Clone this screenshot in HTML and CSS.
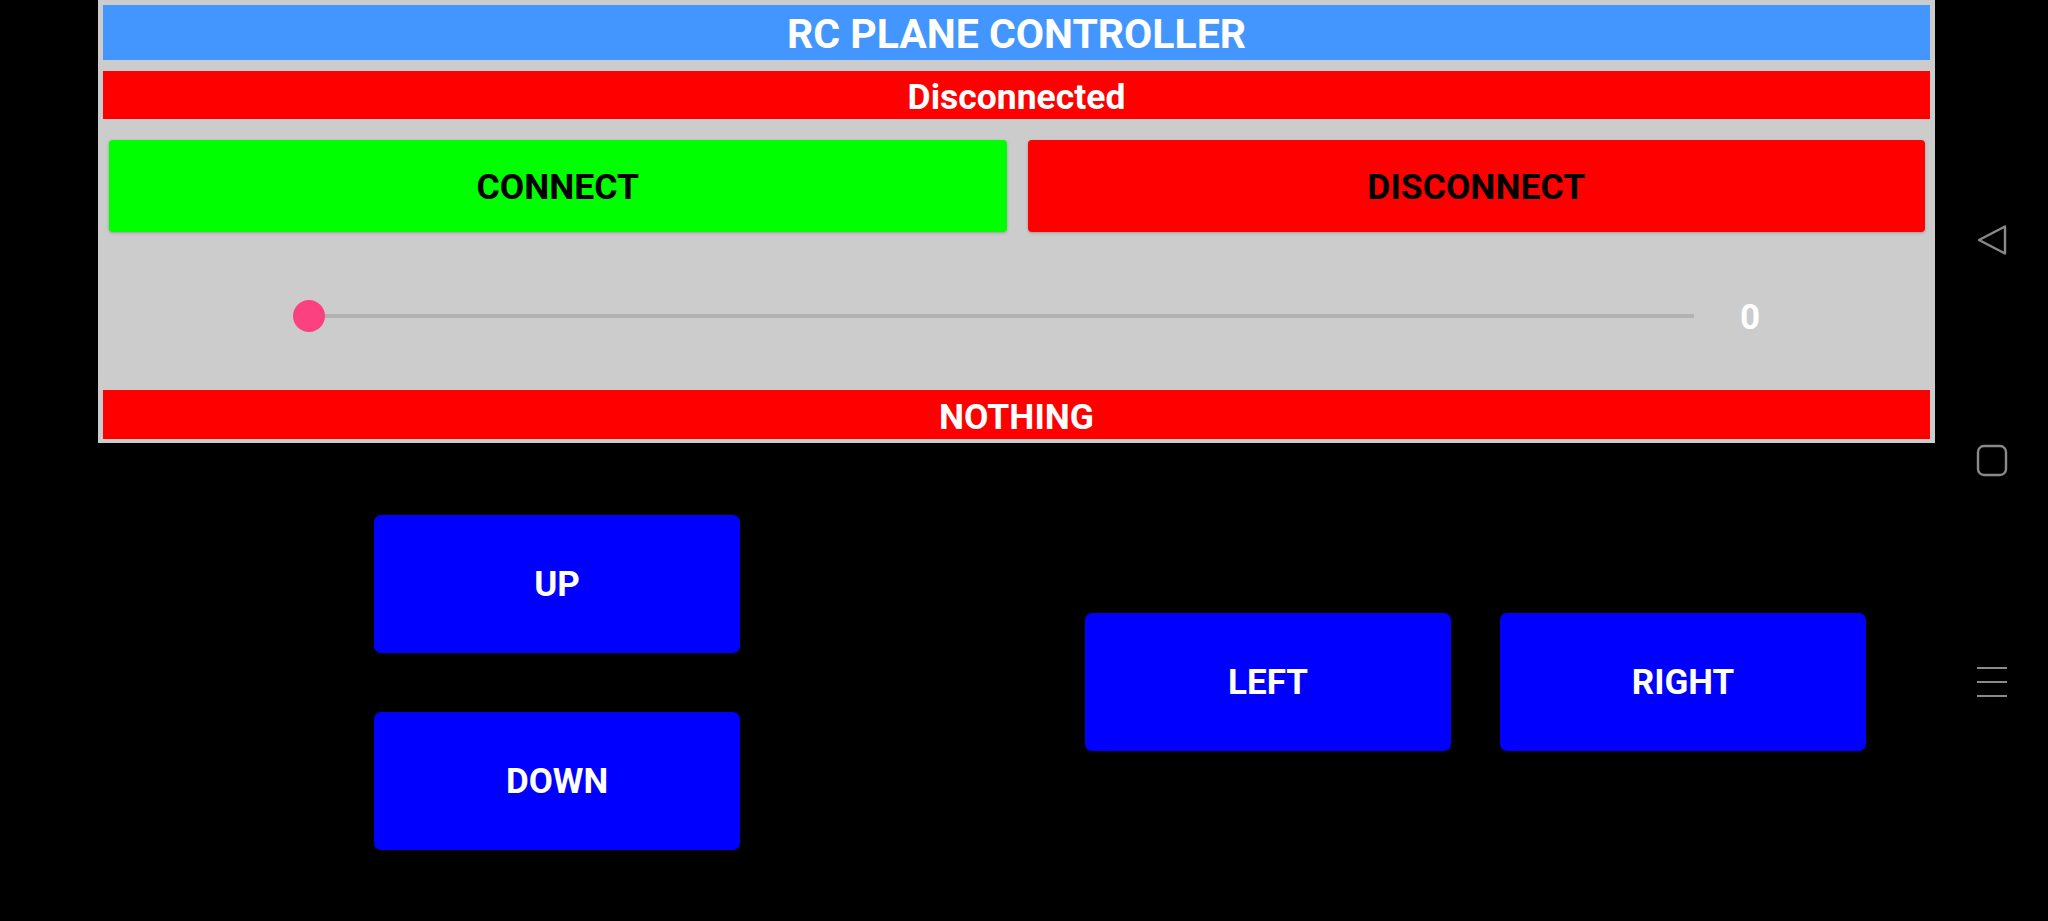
FILE: index.html
```html
<!DOCTYPE html>
<html lang="en">
<head>
<meta charset="utf-8">
<title>RC Plane Controller</title>
<link rel="stylesheet" href="styles.css">
</head>
<body>
<div class="screen">
  <main class="app">
    <section class="panel">
      <div class="title">RC PLANE CONTROLLER</div>
      <div class="status">Disconnected</div>
      <div class="conn-row">
        <button class="btn btn-connect">CONNECT</button>
        <button class="btn btn-disconnect">DISCONNECT</button>
      </div>
      <div class="slider-row">
        <div class="slider">
          <div class="track"></div>
          <div class="thumb"></div>
        </div>
        <div class="value">0</div>
      </div>
      <div class="command">NOTHING</div>
    </section>
    <section class="controls">
      <div class="col">
        <button class="pad">UP</button>
        <button class="pad">DOWN</button>
      </div>
      <div class="row">
        <button class="pad">LEFT</button>
        <button class="pad">RIGHT</button>
      </div>
    </section>
  </main>
  <nav class="navbar">
    <div class="nav-slot">
      <svg width="32" height="32" viewBox="0 0 32 32"><path d="M29 2.5 L3 16 L29 29.5 Z" fill="none" stroke="#8a8a8a" stroke-width="2.4" stroke-linejoin="round"/></svg>
    </div>
    <div class="nav-slot">
      <svg width="32" height="33" viewBox="0 0 32 33"><rect x="2" y="2" width="28" height="29" rx="6" fill="none" stroke="#8a8a8a" stroke-width="2.4"/></svg>
    </div>
    <div class="nav-slot">
      <svg width="32" height="32" viewBox="0 0 32 32"><path d="M1 2 H31 M1 16 H31 M1 30 H31" stroke="#8a8a8a" stroke-width="2.2"/></svg>
    </div>
  </nav>
</div>
</body>
</html>
```

FILE: styles.css
```css
html, body {
  margin: 0;
  padding: 0;
  background: #000;
}
body {
  width: 2048px;
  height: 921px;
  overflow: hidden;
  font-family: Roboto, "Liberation Sans", sans-serif;
}
.screen {
  display: flex;
  width: 2048px;
  height: 921px;
}
.app {
  width: 1952px;
  padding-left: 98px;
  box-sizing: border-box;
  display: flex;
  flex-direction: column;
}
.panel {
  width: 1837px;
  box-sizing: border-box;
  background: #cccccc;
  padding: 5px 5px 4px 5px;
  display: flex;
  flex-direction: column;
}
.title {
  height: 55px;
  box-sizing: border-box;
  padding-top: 3px;
  background: #4496ff;
  color: #fff;
  font-weight: 700;
  font-size: 41px;
  display: flex;
  align-items: center;
  justify-content: center;
}
.status {
  margin-top: 11px;
  height: 48px;
  box-sizing: border-box;
  padding-top: 4px;
  background: #ff0000;
  color: #fff;
  font-weight: 700;
  font-size: 35.5px;
  display: flex;
  align-items: center;
  justify-content: center;
}
.conn-row {
  margin-top: 21px;
  height: 92px;
  padding: 0 5px 0 6px;
  display: flex;
  gap: 21px;
}
.btn {
  flex: 1;
  border: 0;
  border-radius: 4px;
  font-family: Roboto, "Liberation Sans", sans-serif;
  font-weight: 700;
  font-size: 35.5px;
  color: #000;
  box-shadow: 0 1px 3px rgba(0,0,0,0.25);
  padding: 1px 0 0 0;
}
.btn-connect { background: #00ff00; }
.btn-disconnect { background: #ff0000; }
.slider-row {
  height: 148px;
  padding-top: 10px;
  display: flex;
  align-items: center;
  padding-left: 206px;
}
.slider {
  position: relative;
  width: 1385px;
  height: 32px;
  display: flex;
  align-items: center;
}
.track {
  width: 100%;
  height: 4px;
  background: #b2b2b2;
}
.thumb {
  position: absolute;
  left: -16px;
  top: 0;
  width: 32px;
  height: 32px;
  border-radius: 50%;
  background: #fc4181;
}
.value {
  width: 112px;
  padding-top: 2px;
  text-align: center;
  color: #fff;
  font-weight: 700;
  font-size: 35px;
}
.command {
  height: 49px;
  box-sizing: border-box;
  padding-top: 4px;
  background: #ff0000;
  color: #fff;
  font-weight: 700;
  font-size: 35.5px;
  display: flex;
  align-items: center;
  justify-content: center;
}
.controls {
  padding-top: 72px;
  padding-left: 276px;
  display: flex;
  align-items: flex-start;
  gap: 345px;
}
.col {
  display: flex;
  flex-direction: column;
  gap: 59px;
}
.row {
  margin-top: 98px;
  display: flex;
  gap: 49px;
}
.pad {
  width: 366px;
  height: 138px;
  border: 0;
  border-radius: 7px;
  background: #0000ff;
  color: #fff;
  font-family: Roboto, "Liberation Sans", sans-serif;
  font-weight: 700;
  font-size: 35px;
  padding: 0;
}
.navbar {
  width: 79px;
  padding-top: 129px;
  display: flex;
  flex-direction: column;
}
.nav-slot {
  height: 221px;
  display: flex;
  align-items: center;
  justify-content: center;
}
```
